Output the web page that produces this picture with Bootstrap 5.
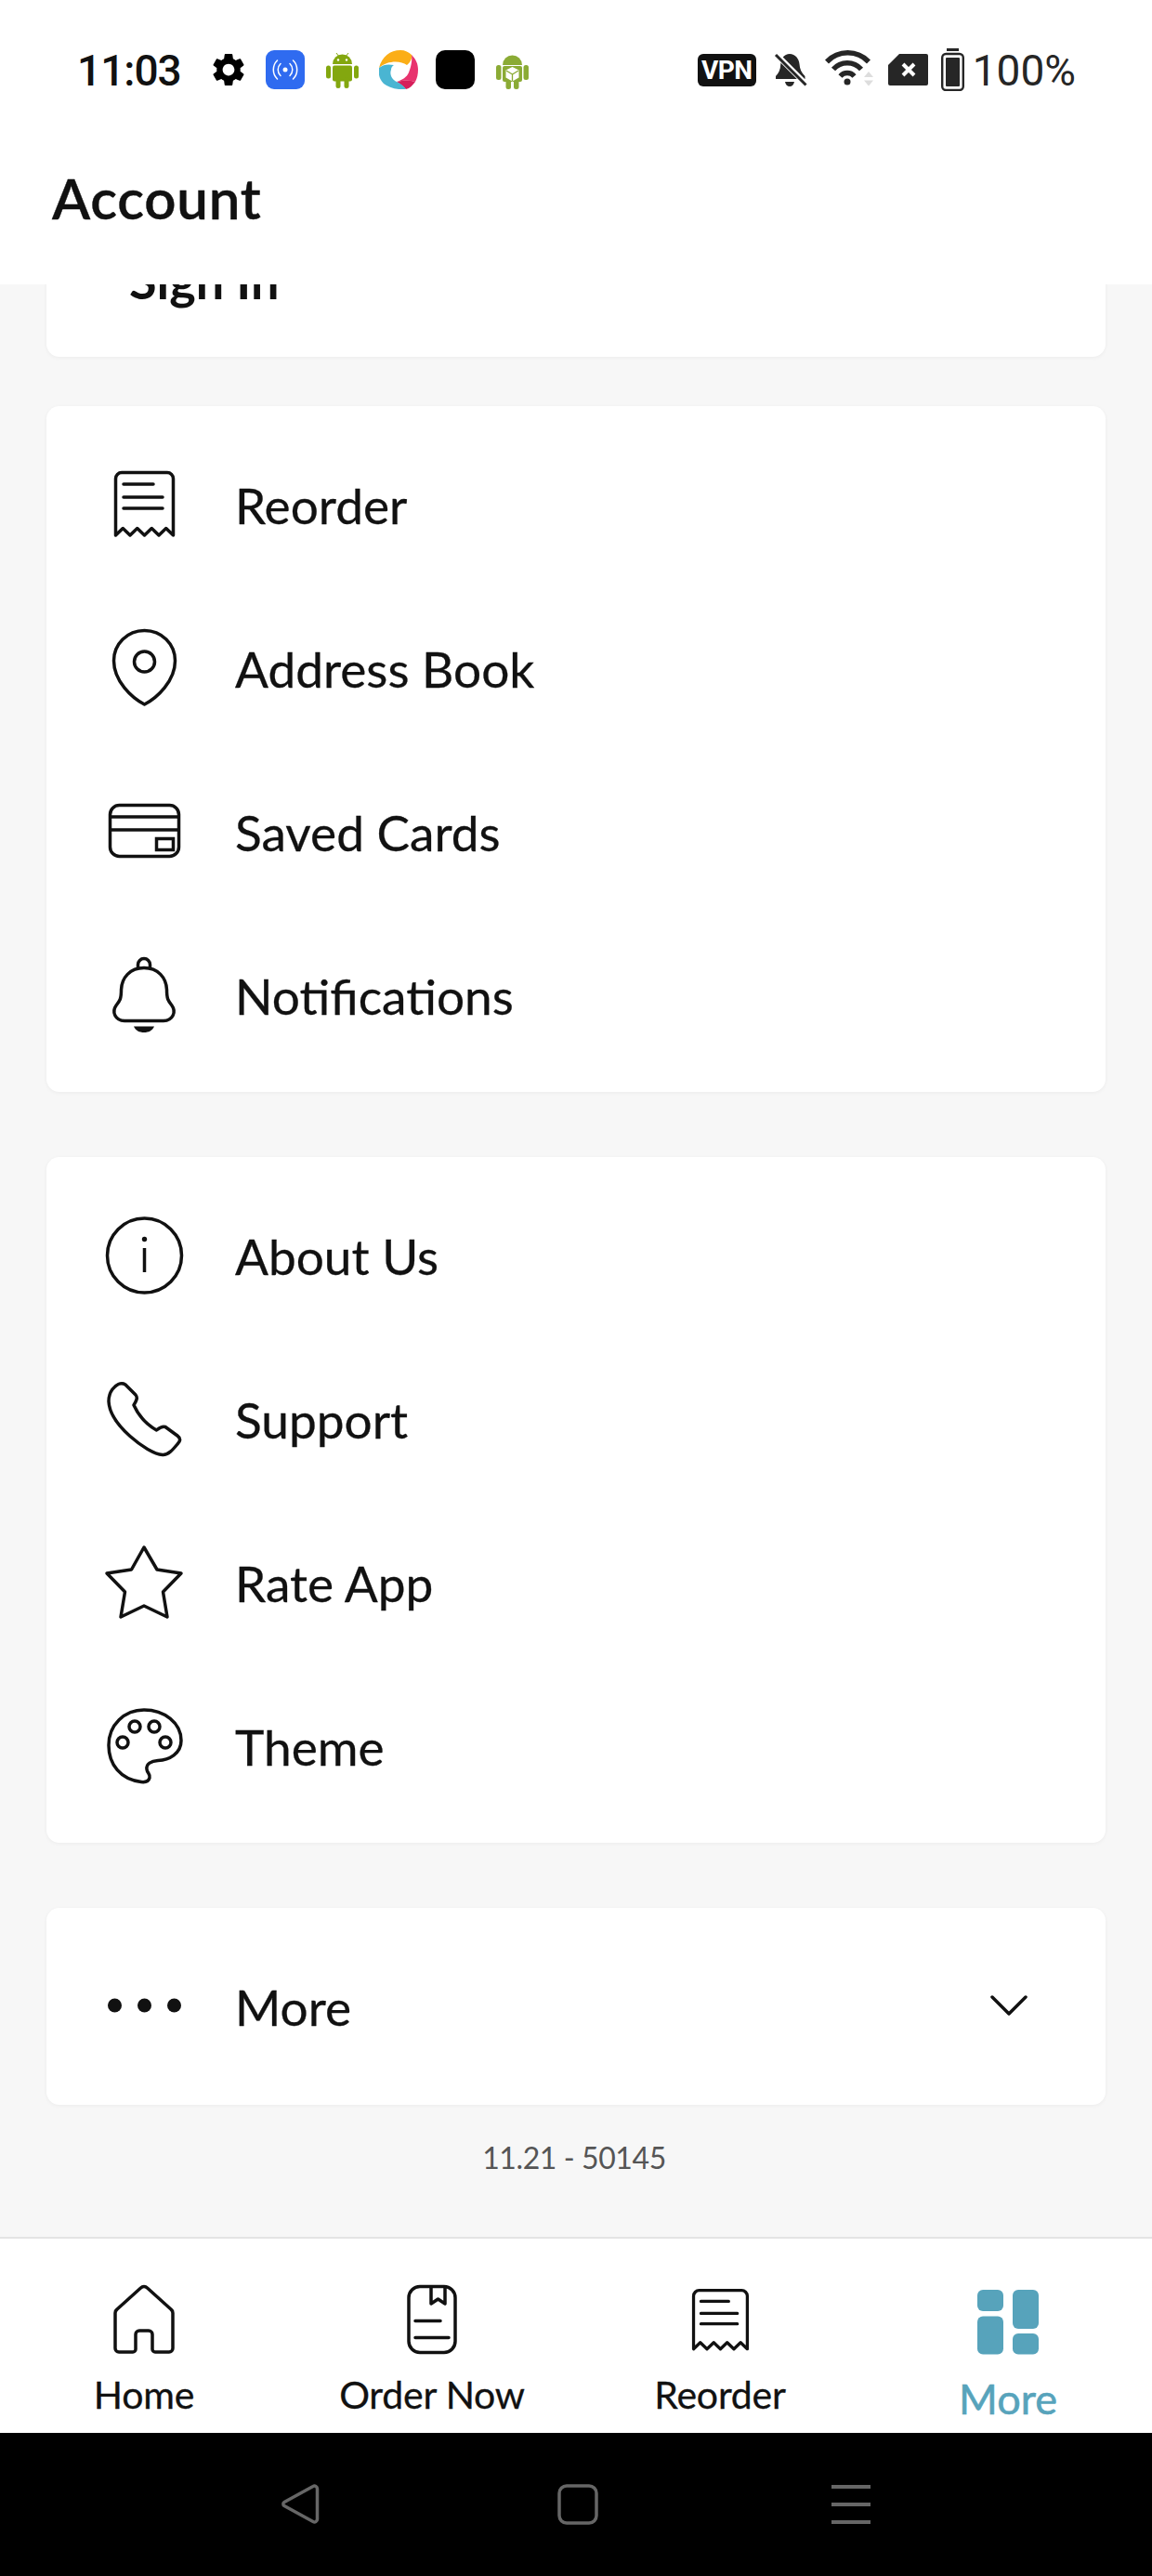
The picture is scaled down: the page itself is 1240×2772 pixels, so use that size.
<!DOCTYPE html>
<html lang="en">
<head>
    <meta charset="UTF-8">
    <meta name="viewport" content="width=device-width, initial-scale=1.0">
    <title>Account</title>
    <link href="https://cdn.jsdelivr.net/npm/bootstrap@5.3.3/dist/css/bootstrap.min.css" rel="stylesheet">
    <style>
        html, body {
            height: 100%;
            margin: 0;
            background-color: #f7f7f7;
        }

        .screen {
            height: 2772px;
            font-family: "Lato", "Liberation Sans", sans-serif;
            color: #111;
        }

        /* status bar */
        .status-bar {
            height: 150px;
            padding: 51px 82px 0 83px;
            font-family: "Roboto", sans-serif;
            font-size: 46px;
            color: #262626;
            line-height: 48px;
        }

        .status-left, .status-right { height: 48px; }
        .status-left svg, .status-right svg { flex: none; }
        .status-text { padding-top: 2px; }
        .status-time { width: 113px; letter-spacing: -1px; font-weight: 500; color: #111; }
        .ml-33 { margin-left: 33px; }
        .ml-23 { margin-left: 23px; }
        .ml-22 { margin-left: 22px; }
        .ml-19 { margin-left: 19px; }
        .ml-16 { margin-left: 16px; }
        .ml-14 { margin-left: 14px; }
        .ml-9 { margin-left: 9px; }
        .wifi-icon { margin-bottom: 4px; }

        .vpn-tag {
            width: 63px;
            height: 35px;
            background-color: #111;
            color: #fff;
            border-radius: 6px;
            font-family: "Roboto", sans-serif;
            font-weight: 700;
            font-size: 28px;
            line-height: 35px;
            text-align: center;
            letter-spacing: -.5px;
        }

        .title-bar {
            height: 156px;
            padding-left: 56px;
            font-size: 60px;
            font-weight: 600;
            letter-spacing: .8px;
            -webkit-text-stroke: .4px #111;
            line-height: 70px;
            padding-top: 28px;
        }

        /* scrolling part */
        .scroll-area {
            height: 2101px;
            overflow: hidden;
            padding: 0 50px;
        }

        .menu-card {
            border: 0;
            border-radius: 14px;
            box-shadow: 0 1px 4px #0000000d;
            margin-bottom: 70px;
        }

        .signin-card {
            margin-top: -74px;
            margin-bottom: 53px;
            padding: 40px 0 52px 89px;
            font-size: 54px;
            line-height: 60px;
            font-weight: 700;
        }

        .menu-list {
            padding: 17px 0;
        }

        .menu-row {
            height: 176px;
            padding: 0 0 0 60px;
            border: 0;
            background: none;
            font-size: 53.2px;
            -webkit-text-stroke: .3px #111;
            color: #111;
        }

        .menu-row svg { flex: none; }
        .menu-label { margin-left: 53px; padding-top: 4px; }

        .more-card { margin-bottom: 0; padding-bottom: 2px; }
        .more-chevron { margin-left: auto; margin-right: 84px; }

        .version-text {
            height: 141px;
            padding: 37px 4px 0 0;
            text-align: center;
            font-size: 32px;
            letter-spacing: -.4px;
            line-height: 40px;
            color: #555;
        }

        /* bottom tabs */
        .tab-bar {
            height: 211px;
            background-color: #fff;
            border-top: 2px solid #e4e4e4;
            padding-top: 42px;
        }

        .tab-icon-small { margin: 3px; }

        .tab-label {
            margin-top: 11px;
            font-size: 41px;
            letter-spacing: -.2px;
            -webkit-text-stroke: .3px #111;
            line-height: 50px;
            color: #111;
        }

        .tab-label-active {
            margin-top: 15px;
            font-size: 45px;
            letter-spacing: 0;
            -webkit-text-stroke: .6px #57a3bb;
            color: #57a3bb;
        }

        .system-bar {
            height: 154px;
            background-color: #000;
        }
    </style>
</head>
<body>
<div class="screen d-flex flex-column">
    <svg width="0" height="0" class="position-absolute">
        <symbol id="receipt" viewBox="0 0 90 90">
            <path d="M14.500 79V18a6.500 6.500 0 0 1 6.500-6.500h49a6.500 6.500 0 0 1 6.500 6.500v61l-7.750-7.500-7.750 7.500-7.750-7.500-7.750 7.500-7.750-7.500-7.750 7.500-7.750-7.500z" fill="none" stroke="#111" stroke-width="3.500" stroke-linejoin="round"/>
            <path d="M23 24h32M23 38h42M23 50h42" stroke="#111" stroke-width="3.500" stroke-linecap="round"/>
        </symbol>
    </svg>

    <div class="bg-white">
        <div class="status-bar d-flex justify-content-between">
            <div class="status-left d-flex align-items-center">
                <span class="status-text status-time">11:03</span>
                <svg class="ml-33" width="34" height="36" viewBox="2.400 2 19.200 20" fill="#000"><path fill-rule="evenodd" d="M19.140 12.940c.04-.3.06-.61.06-.94 0-.32-.02-.64-.07-.94l2.030-1.580c.18-.14.23-.41.12-.61l-1.920-3.320c-.12-.22-.37-.29-.59-.22l-2.390.96c-.5-.38-1.030-.7-1.620-.94l-.36-2.540c-.04-.24-.24-.41-.48-.41h-3.840c-.24 0-.43.17-.47.41l-.36 2.540c-.59.24-1.130.57-1.620.94l-2.390-.96c-.22-.08-.47 0-.59.22L2.740 8.870c-.12.21-.08.47.12.61l2.030 1.580c-.05.3-.09.63-.09.94s.02.64.07.94l-2.030 1.580c-.18.14-.23.41-.12.61l1.920 3.320c.12.22.37.29.59.22l2.390-.96c.5.38 1.030.7 1.620.94l.36 2.540c.05.24.24.41.48.41h3.840c.24 0 .44-.17.47-.41l.36-2.540c.59-.24 1.130-.56 1.620-.94l2.390.96c.22.08.47 0 .59-.22l1.920-3.320c.12-.22.07-.47-.12-.61l-2.010-1.580zM12 15.600c-1.980 0-3.600-1.620-3.600-3.600s1.620-3.600 3.600-3.600 3.600 1.620 3.600 3.600-1.620 3.600-3.600 3.600z"/></svg>
                <svg class="ml-23" width="42" height="42" viewBox="0 0 42 42"><rect width="42" height="42" rx="9" fill="#2f6bf0"/><circle cx="21" cy="21" r="2.500" fill="#fff"/><path d="M16 14.500a9 9 0 0 0 0 13M26 14.500a9 9 0 0 1 0 13M12.500 11a14 14 0 0 0 0 20M29.500 11a14 14 0 0 1 0 20" fill="none" stroke="#fff" stroke-width="1.500" stroke-linecap="round"/></svg>
                <svg class="ml-23" width="35" height="40" viewBox="0 0 35 40" fill="#83a70f"><path d="M7 14a10.500 10.500 0 0 1 21 0z"/><path d="M11 2l3 4M24 2l-3 4" stroke="#83a70f" stroke-width="1"/><rect x="7" y="15.500" width="21" height="17" rx="2"/><rect x="0" y="15.500" width="5" height="14" rx="2.500"/><rect x="30" y="15.500" width="5" height="14" rx="2.500"/><rect x="10.500" y="28" width="5" height="12" rx="2.500"/><rect x="19.500" y="28" width="5" height="12" rx="2.500"/><circle cx="13" cy="9.500" r="1.200" fill="#fff"/><circle cx="22" cy="9.500" r="1.200" fill="#fff"/></svg>
                <svg class="ml-22" width="42" height="42" viewBox="0 0 42 42"><path d="M0 19C3 7 12 0 23 0c5 0 9 2 12 5 1 3-1 8-5 11C23 11 9 11 0 19z" fill="#fbae17"/><path d="M35 5c5 5 7 10 7 16 0 5-1 9-3 13-7-2-14-1-20 0 6-2 11-5 13-10 2-5 4-12 3-19z" fill="#e8336e"/><path d="M39 34c-3 4-6 7-10 8-3-3-6-6-10-8 6-1 13-2 20 0z" fill="#d61f5b"/><path d="M0 19c-1 6 0 12 5 17 5 4 14 7 24 6-3-4-6-6-10-8-5-2-8-8-6-13 0-2 1-4 3-5C10 15 5 15 0 19z" fill="#4ab5d2"/></svg>
                <svg class="ml-19" width="42" height="42" viewBox="0 0 42 42"><rect width="42" height="42" rx="10" fill="#000"/></svg>
                <svg class="ml-23" width="35" height="41" viewBox="0 0 35 41" fill="#8bab35"><path d="M7 15a10.500 10.500 0 0 1 21 0z"/><rect x="7" y="16" width="21" height="17" rx="2"/><rect x="0" y="15" width="5.500" height="16" rx="2.500"/><rect x="29.500" y="15" width="5.500" height="16" rx="2.500"/><rect x="10.500" y="29" width="5.500" height="12" rx="2.500"/><rect x="19" y="29" width="5.500" height="12" rx="2.500"/><path d="M17.500 17l7 3.500v8l-7 4-7-4v-8z" fill="#fff"/><path d="M17.500 25v7M11 21l6.500 4 6.500-4" stroke="#8bab35" stroke-width="1.300" fill="none"/></svg>
            </div>
            <div class="status-right d-flex align-items-center">
                <div class="vpn-tag">VPN</div>
                <svg class="ml-19" width="36" height="36" viewBox="0 0 36 36"><path d="M17 1c6 0 10 5 10.500 11 .3 5 2 9 6 13v3H2v-3c3-3 5-7 5.300-13C7.500 6 11 1 17 1zM12 31h10c-.5 3-2.500 5-5 5s-4.500-2-5-5z" fill="#262626"/><path d="M1 0l34 34" stroke="#fff" stroke-width="6"/><path d="M2 2l32.500 32.500" stroke="#262626" stroke-width="3"/></svg>
                <svg class="ml-19 wifi-icon" width="52" height="40" viewBox="0 0 52 40"><path d="M2 13.500a31 31 0 0 1 45 0M9 21.500a20 20 0 0 1 30 0M16.500 29a10 10 0 0 1 15 0" fill="none" stroke="#262626" stroke-width="5.500"/><circle cx="24" cy="35" r="3.500" fill="#262626"/><path d="M42 30h10l-5-6zM42 33.500h10l-5 6z" fill="#ddd"/></svg>
                <svg class="ml-16" width="43" height="34" viewBox="0 0 43 34"><path d="M12 0h29a2 2 0 0 1 2 2v30a2 2 0 0 1-2 2H2a2 2 0 0 1-2-2V12z" fill="#262626"/><path d="M16 11l12 12M28 11L16 23" stroke="#fff" stroke-width="4"/></svg>
                <svg class="ml-14" width="25" height="46" viewBox="0 0 25 46"><rect x="6" y="0" width="13" height="3" fill="#262626"/><rect x="1.200" y="6" width="22.600" height="39" rx="4" fill="none" stroke="#262626" stroke-width="2.400"/><rect x="5" y="10" width="15" height="31" rx="1" fill="#262626"/></svg>
                <span class="ml-9 status-text">100%</span>
            </div>
        </div>
        <div class="title-bar">Account</div>
    </div>

    <div class="scroll-area">
        <div class="card menu-card signin-card">Sign In</div>

        <div class="card menu-card">
            <div class="list-group list-group-flush menu-list">
                <div class="list-group-item menu-row d-flex align-items-center">
                    <svg width="90" height="90"><use href="#receipt"/></svg>
                    <span class="menu-label">Reorder</span>
                </div>
                <div class="list-group-item menu-row d-flex align-items-center">
                    <svg width="90" height="90" viewBox="0 0 90 90" fill="none" stroke="#111" stroke-width="3.500"><path d="M45.500 5.500C27 5.500 12.500 20 12.500 38 12.500 60 32 78 45.500 85 59 78 78.500 60 78.500 38 78.500 20 64 5.500 45.500 5.500z" stroke-linejoin="round"/><circle cx="45.500" cy="39" r="11"/></svg>
                    <span class="menu-label">Address Book</span>
                </div>
                <div class="list-group-item menu-row d-flex align-items-center">
                    <svg width="90" height="90" viewBox="0 0 90 90" fill="none" stroke="#111" stroke-width="3.500"><rect x="8.500" y="17.500" width="74" height="55" rx="10"/><path d="M8.500 30h74M8.500 44h74"/><rect x="58.500" y="53.500" width="18" height="12"/></svg>
                    <span class="menu-label">Saved Cards</span>
                </div>
                <div class="list-group-item menu-row d-flex align-items-center">
                    <svg width="90" height="90" viewBox="0 0 90 90" fill="none" stroke="#111" stroke-width="3.500"><path d="M45 16.500C30 16.500 21 27 20.500 40 20.500 50 19 52 15 57 10 64 14 73 24 73.500H66C76 73 80 64 75 57 71 52 69.500 50 69.500 40 69 27 60 16.500 45 16.500z"/><path d="M38.500 18v-5a6.500 6.500 0 0 1 13 0v5"/><path d="M34 79.500H56C54 84 50 86 45 86 40 86 36 84 34 79.500z" fill="#111" stroke="none"/></svg>
                    <span class="menu-label">Notifications</span>
                </div>
            </div>
        </div>

        <div class="card menu-card">
            <div class="list-group list-group-flush menu-list">
                <div class="list-group-item menu-row d-flex align-items-center">
                    <svg width="90" height="90" viewBox="0 0 90 90" fill="none" stroke="#111" stroke-width="3.500"><circle cx="45.500" cy="46" r="40"/><path d="M45.500 38v26"/><circle cx="45.500" cy="28.500" r="2.700" fill="#111" stroke="none"/></svg>
                    <span class="menu-label">About Us</span>
                </div>
                <div class="list-group-item menu-row d-flex align-items-center">
                    <svg width="90" height="90" viewBox="0 0 90 90" fill="none" stroke="#111" stroke-width="3.500" stroke-linejoin="round"><path d="M11 14C14.500 9.500 20 6 25 9L36 20C38.500 23 37 26 34 31 39 42 48 52 58.500 58 61 56 64 53 68 54.500L81 64C85 67 84 70 81 73 76 79 71 85 65 84.500 48 83 8 52 7 27 7 22 8 18 11 14z"/></svg>
                    <span class="menu-label">Support</span>
                </div>
                <div class="list-group-item menu-row d-flex align-items-center">
                    <svg width="90" height="90" viewBox="0 0 90 90" fill="none" stroke="#111" stroke-width="3.500" stroke-linejoin="round"><path d="M45 8L59 32 85 36 65.500 56 70 83 45 71 20 83 24.500 56 5 36 31.500 32z"/></svg>
                    <span class="menu-label">Rate App</span>
                </div>
                <div class="list-group-item menu-row d-flex align-items-center">
                    <svg width="90" height="90" viewBox="0 0 90 90" fill="none" stroke="#111" stroke-width="3.500"><path d="M45 7C67 7 85 21 85 40 85 54 72 61 60 61.500 53 62 47 65 48 71 48.500 75 52 76 51 80 50 84 46 85 42 84.500 20 82 7 66 7 45 7 23 24 7 45 7z"/><circle cx="35" cy="25" r="6"/><circle cx="56" cy="25" r="6"/><circle cx="22" cy="42" r="6"/><circle cx="68" cy="42" r="6"/></svg>
                    <span class="menu-label">Theme</span>
                </div>
            </div>
        </div>

        <div class="card menu-card more-card">
            <div class="list-group list-group-flush menu-list">
                <div class="list-group-item menu-row d-flex align-items-center">
                    <svg width="90" height="90" viewBox="0 0 90 90" fill="#111"><circle cx="13.500" cy="45" r="7.500"/><circle cx="45.500" cy="45" r="7.500"/><circle cx="77.500" cy="45" r="7.500"/></svg>
                    <span class="menu-label">More</span>
                    <svg class="more-chevron" width="40" height="24" viewBox="0 0 40 24" fill="none" stroke="#111" stroke-width="3.500" stroke-linecap="round" stroke-linejoin="round"><path d="M2 3l18 18L38 3"/></svg>
                </div>
            </div>
        </div>

        <div class="version-text">11.21 - 50145</div>
    </div>

    <div class="tab-bar row g-0 text-center flex-shrink-0">
        <div class="col-3">
            <svg width="90" height="90" viewBox="0 0 90 90" fill="none" stroke="#111" stroke-width="3.500" stroke-linejoin="round"><path d="M41.500 11a5 5 0 0 1 7 0L74 34a5 5 0 0 1 2 4V76a4 4 0 0 1-4 4H57a3 3 0 0 1-3-3V61a4 4 0 0 0-4-4H40a4 4 0 0 0-4 4V77a3 3 0 0 1-3 3H18a4 4 0 0 1-4-4V38a5 5 0 0 1 2-4z"/></svg>
            <div class="tab-label">Home</div>
        </div>
        <div class="col-3">
            <svg width="90" height="90" viewBox="0 0 90 90" fill="none" stroke="#111" stroke-width="3.500" stroke-linecap="round"><rect x="20" y="9.500" width="50" height="71" rx="12"/><path d="M44 10V28L51.500 23 59 28V10M27 46.500H54M27 64.500H63" stroke-linejoin="round"/></svg>
            <div class="tab-label">Order Now</div>
        </div>
        <div class="col-3">
            <svg class="tab-icon-small" width="84" height="84" viewBox="0 0 90 90"><use href="#receipt"/></svg>
            <div class="tab-label">Reorder</div>
        </div>
        <div class="col-3">
            <svg width="90" height="90" viewBox="0 0 90 90" fill="#57a3bb"><rect x="12" y="13" width="28" height="23" rx="6"/><rect x="12" y="41.500" width="28" height="41" rx="6"/><rect x="50" y="13" width="28" height="42" rx="6"/><rect x="50" y="60" width="28" height="22.500" rx="6"/></svg>
            <div class="tab-label tab-label-active">More</div>
        </div>
    </div>

    <div class="system-bar d-flex flex-shrink-0">
        <div class="col-12 d-flex justify-content-center align-items-start">
            <svg width="700" height="154" viewBox="0 0 700 154" fill="none" stroke="#666" stroke-width="3.500" stroke-linejoin="round"><path d="M36 74.500L67 57.500a3 3 0 0 1 4.500 2.500V93a3 3 0 0 1-4.500 2.500L36 78.500a2.300 2.300 0 0 1 0-4z"/><rect x="332" y="57" width="40" height="40" rx="8"/><path d="M625 58h42M625 77h42M625 96h42" stroke-width="4"/></svg>
        </div>
    </div>
</div>
<script src="https://cdn.jsdelivr.net/npm/bootstrap@5.3.3/dist/js/bootstrap.bundle.min.js"></script>
</body>
</html>
